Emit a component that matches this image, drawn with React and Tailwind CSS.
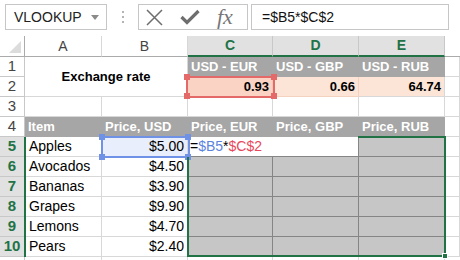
import React from "react";

const font = { fontFamily: '"Liberation Sans", Arial, sans-serif' };

const items = [
  ["Apples", "$5.00"],
  ["Avocados", "$4.50"],
  ["Bananas", "$3.90"],
  ["Grapes", "$9.90"],
  ["Lemons", "$4.70"],
  ["Pears", "$2.40"],
];

function Handle({ className }) {
  return <div className={`absolute w-[6px] h-[6px] ${className}`} />;
}

function FormulaBar() {
  return (
    <div className="h-[36px] flex items-start pt-[4px] bg-white">
      <div className="ml-[5px] w-[102px] h-[26px] border border-[#c6c6c6] flex items-center pl-[8px] pr-[7px]">
        <span className="text-[14px] text-[#222] flex-1">VLOOKUP</span>
        <svg width="8" height="5" viewBox="0 0 8 5">
          <path d="M0 0 L8 0 L4 5 Z" fill="#8a8a8a" />
        </svg>
      </div>
      <div className="w-[31px] h-[26px] flex flex-col items-center justify-center gap-[3px]">
        <div className="w-[2px] h-[2px] bg-[#b4b4b4]" />
        <div className="w-[2px] h-[2px] bg-[#b4b4b4]" />
        <div className="w-[2px] h-[2px] bg-[#b4b4b4]" />
      </div>
      <div className="w-[110px] h-[26px] border border-[#c6c6c6] flex items-center">
        <svg className="ml-[7px]" width="17" height="17" viewBox="0 0 17 17">
          <path d="M1 1 L16 16 M16 1 L1 16" stroke="#6e6e6e" strokeWidth="1.5" />
        </svg>
        <svg className="ml-[17px]" width="20" height="16" viewBox="0 0 20 16">
          <path d="M1.5 8 L7 13.5 L18.5 2" stroke="#6e6e6e" strokeWidth="3.2" fill="none" />
        </svg>
        <span
          className="ml-[17px] text-[22px] italic text-[#777] leading-none"
          style={{ fontFamily: '"Liberation Serif", "Times New Roman", serif' }}
        >
          fx
        </span>
      </div>
      <div className="ml-[3px] w-[198px] h-[26px] border border-[#c6c6c6] flex items-center pl-[10px]">
        <span className="text-[14px] text-[#111]">=$B5*$C$2</span>
      </div>
    </div>
  );
}

const grid = "border-r border-b border-[#d8d8d8]";
const rowHead = "border-r border-b border-[#c8c8c8] flex items-center justify-center text-[15px]";
const greyHead = "bg-[#a6a6a6] border-r border-b border-[#a6a6a6] flex items-center text-white font-bold text-[13px] pl-[3px]";
const shade = "bg-[#c6c6c6] border-r border-b border-[#858585]";

export default function App() {
  return (
    <div className="w-[460px] h-[260px] overflow-hidden bg-white text-black" style={font}>
      <FormulaBar />
      <div className="relative">
        <div className="grid grid-cols-[25px_77px_86px_85px_86px_86px_15px] grid-rows-[21px_repeat(10,20px)_10px]">
          {/* column headers */}
          <div className="border-r border-b border-[#ababab] relative">
            <svg className="absolute right-[3px] bottom-[3px]" width="12" height="12" viewBox="0 0 12 12">
              <path d="M12 0 L12 12 L0 12 Z" fill="#dcdcdc" />
            </svg>
          </div>
          <div className="border-r border-b border-[#ababab] border-r-[#d8d8d8] flex items-center justify-center text-[14px] text-[#444]">A</div>
          <div className="border-r border-b border-[#ababab] border-r-[#d8d8d8] flex items-center justify-center text-[14px] text-[#444]">B</div>
          <div className="bg-[#e1e1e1] border-r border-r-[#c8c8c8] border-b-2 border-b-[#217346] flex items-center justify-center text-[14px] font-bold text-[#217346]">C</div>
          <div className="bg-[#e1e1e1] border-r border-r-[#c8c8c8] border-b-2 border-b-[#217346] flex items-center justify-center text-[14px] font-bold text-[#217346]">D</div>
          <div className="bg-[#e1e1e1] border-r border-r-[#c8c8c8] border-b-2 border-b-[#217346] flex items-center justify-center text-[14px] font-bold text-[#217346]">E</div>
          <div className="border-b border-[#ababab]" />

          {/* row 1 */}
          <div className={`${rowHead} text-[#444]`}>1</div>
          <div className={`col-span-2 row-span-2 ${grid} flex items-center justify-center font-bold text-[13px]`}>Exchange rate</div>
          <div className={greyHead}>USD - EUR</div>
          <div className={greyHead}>USD - GBP</div>
          <div className={greyHead}>USD - RUB</div>
          <div className={grid} />

          {/* row 2 */}
          <div className={`${rowHead} text-[#444]`}>2</div>
          <div className="bg-[#fad3c4] border-r border-b border-[#f0c8b4] flex items-center justify-end pr-[3px] font-bold text-[13px]">0.93</div>
          <div className="bg-[#fce4d6] border-r border-b border-[#f4d2c0] flex items-center justify-end pr-[3px] font-bold text-[13px]">0.66</div>
          <div className="bg-[#fce4d6] border-r border-b border-[#d8d8d8] flex items-center justify-end pr-[3px] font-bold text-[13px]">64.74</div>
          <div className={grid} />

          {/* row 3 */}
          <div className={`${rowHead} text-[#444]`}>3</div>
          <div className={grid} />
          <div className={grid} />
          <div className={grid} />
          <div className={grid} />
          <div className={grid} />
          <div className={grid} />

          {/* row 4 */}
          <div className={`${rowHead} text-[#444]`}>4</div>
          <div className={greyHead}>Item</div>
          <div className={greyHead}>Price, USD</div>
          <div className={greyHead}>Price, EUR</div>
          <div className={greyHead}>Price, GBP</div>
          <div className={greyHead}>Price, RUB</div>
          <div className={grid} />

          {/* rows 5-10 */}
          {items.map(([name, price], i) => (
            <React.Fragment key={name}>
              <div className={`${rowHead} bg-[#e1e1e1] font-bold text-[#217346]`}>{i + 5}</div>
              <div className={`${grid} flex items-center pl-[4px] text-[14px]`}>{name}</div>
              <div className={`${grid} flex items-center justify-end pr-[3px] text-[14px] ${i === 0 ? "bg-[#e8eefb]" : ""}`}>{price}</div>
              {i === 0 ? (
                <>
                  <div className="col-span-2 bg-white border-r border-b border-[#858585] flex items-center pl-[2px] text-[14px]">
                    <span>=</span>
                    <span className="text-[#5b84e0]">$B5</span>
                    <span>*</span>
                    <span className="text-[#e8485a]">$C$2</span>
                  </div>
                  <div className={shade} />
                </>
              ) : (
                <>
                  <div className={shade} />
                  <div className={shade} />
                  <div className={`${shade} border-r-[#a0a0a0]`} />
                </>
              )}
              <div className={grid} />
            </React.Fragment>
          ))}

          {/* row 11 */}
          <div className="border-r border-[#c8c8c8]" />
          <div className="border-r border-[#d8d8d8]" />
          <div className="border-r border-[#d8d8d8]" />
          <div className="border-r border-[#d8d8d8]" />
          <div className="border-r border-[#d8d8d8]" />
          <div className="border-r border-[#d8d8d8]" />
          <div />
        </div>

        {/* reference box on C2 */}
        <div className="absolute left-[186px] top-[40px] w-[89px] h-[22px] border-2 border-[#e46a6a]" />
        <Handle className="left-[184px] top-[38px] bg-[#e46a6a]" />
        <Handle className="left-[271px] top-[38px] bg-[#e46a6a]" />
        <Handle className="left-[184px] top-[57px] bg-[#e46a6a]" />
        <Handle className="left-[271px] top-[57px] bg-[#e46a6a]" />

        {/* reference box on B5 */}
        <div className="absolute left-[101px] top-[100px] w-[89px] h-[22px] border-2 border-[#6f92e6]" />
        <Handle className="left-[99px] top-[98px] bg-[#6f92e6]" />
        <Handle className="left-[185px] top-[98px] bg-[#6f92e6]" />
        <Handle className="left-[99px] top-[118px] bg-[#6f92e6]" />
        <Handle className="left-[185px] top-[118px] bg-[#6f92e6]" />

        {/* green selection edges */}
        <div className="absolute left-[24px] top-[101px] w-[2px] h-[120px] bg-[#217346]" />
        <div className="absolute left-[187px] top-[121px] w-[2px] h-[100px] bg-[#217346]" />
        <div className="absolute left-[358px] top-[100px] w-[88px] h-[2px] bg-[#217346]" />
        <div className="absolute left-[444px] top-[100px] w-[2px] h-[121px] bg-[#217346]" />
        <div className="absolute left-[187px] top-[219px] w-[259px] h-[2px] bg-[#217346]" />
        <div className="absolute left-[442px] top-[217px] w-[6px] h-[6px] bg-[#217346] border border-white" />
      </div>
    </div>
  );
}
